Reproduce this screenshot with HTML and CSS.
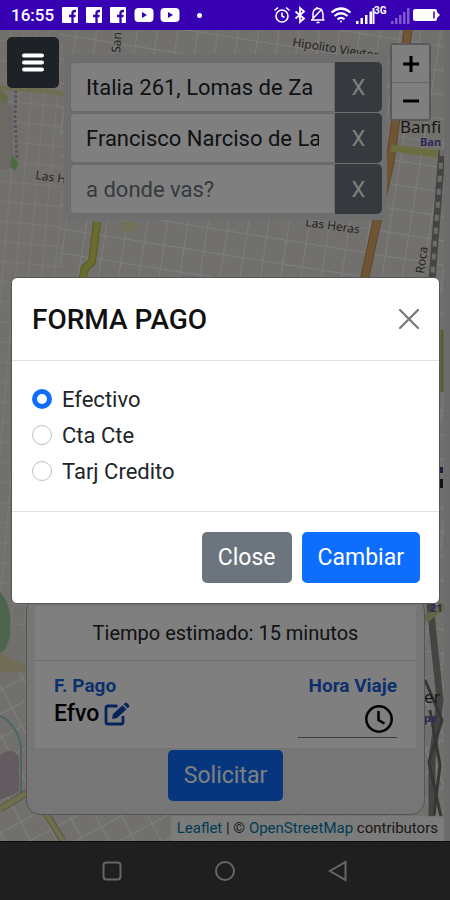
FILE: index.html
```html
<!DOCTYPE html>
<html lang="es">
  <head>
    <meta charset="UTF-8" />
    <meta name="viewport" content="width=device-width, initial-scale=1.0" />
    <title>Forma Pago</title>
    <link rel="stylesheet" href="styles.css">
  </head>
  <body>
    <header class="status-bar">
      <span class="status-time">16:55</span>
      <div class="status-apps">
        <svg width="16" height="16" viewBox="0 0 16 16"><rect width="16" height="16" rx="1" fill="#fff"/><path d="M14 4h-1q-2.500 0-2.500 2.500V16M7 9h6.500" fill="none" stroke="#3700b3" stroke-width="2.300"/></svg>
        <svg width="16" height="16" viewBox="0 0 16 16"><rect width="16" height="16" rx="1" fill="#fff"/><path d="M14 4h-1q-2.500 0-2.500 2.500V16M7 9h6.500" fill="none" stroke="#3700b3" stroke-width="2.300"/></svg>
        <svg width="16" height="16" viewBox="0 0 16 16"><rect width="16" height="16" rx="1" fill="#fff"/><path d="M14 4h-1q-2.500 0-2.500 2.500V16M7 9h6.500" fill="none" stroke="#3700b3" stroke-width="2.300"/></svg>
        <svg width="20" height="16" viewBox="0 0 20 16"><rect x="0.500" y="1" width="19" height="14" rx="4" fill="#fff"/><path d="M8 5v6l5-3z" fill="#3700b3"/></svg>
        <svg width="20" height="16" viewBox="0 0 20 16"><rect x="0.500" y="1" width="19" height="14" rx="4" fill="#fff"/><path d="M8 5v6l5-3z" fill="#3700b3"/></svg>
      </div>
      <span class="status-dot"></span>
      <div class="status-system">
        <svg width="18" height="18" viewBox="0 0 18 18" fill="none" stroke="#fff" stroke-width="1.600"><circle cx="9" cy="10" r="6"/><path d="M9 6.500V10l2.500 1.500M1.500 4.500l3.500-3M16.500 4.500L13 1.500"/></svg>
        <svg width="12" height="18" viewBox="0 0 12 18" fill="none" stroke="#fff" stroke-width="1.800"><path d="M1.500 5.500l8.500 7L6 16V2l4 3.500-8.500 7"/></svg>
        <svg width="18" height="18" viewBox="0 0 18 18" fill="none" stroke="#fff" stroke-width="1.500"><path d="M2 14h13.500M4 13.500V8q0-5 4.500-5.500T14 8v6M8 2.500V1M7.500 16.500h3M2.500 14L13 3"/></svg>
        <svg width="22" height="18" viewBox="0 0 22 18" fill="none" stroke="#fff" stroke-width="2.200"><path d="M1.500 6.500q9.500-8 19 0M4.500 10q6.500-5.500 13 0M7.500 13.300q3.500-3 7 0"/><circle cx="11" cy="15.500" r="1" fill="#fff" stroke="none"/></svg>
        <svg width="32" height="20" viewBox="0 0 32 20"><path fill="#fff" d="M1 16h2.500v3H1zM5.500 13H8v6H5.500zM10 10h2.500v9H10zM14.500 6.500H17V19h-2.500z"/><path fill="#fff" d="M17.500 3h2v16h-2z"/><text class="network" x="19" y="9">3G</text></svg>
        <svg width="20" height="20" viewBox="0 0 20 20" fill="#7f5ad0"><path d="M1 16h2.500v3H1zM5 13h2.500v6H5zM9 10h2.500v9H9zM13 7h2.500v12H13zM17 3h2.500v16H17z"/></svg>
        <svg width="27" height="16" viewBox="0 0 27 16"><rect x="0" y="2" width="24" height="12" rx="2" fill="#fff"/><path d="M21 4.500v7" stroke="#3700b3" stroke-width="1.500"/><path d="M24 5l3 3-3 3z" fill="#fff"/></svg>
      </div>
    </header>

    <main class="app">
      <svg class="map" viewBox="0 30 444 811" preserveAspectRatio="xMidYMid slice" aria-hidden="true">
        <defs>
          <pattern id="blocks" width="20" height="24" patternUnits="userSpaceOnUse" patternTransform="rotate(9)">
            <path d="M0 0H20M0 0V24" stroke="#fff" stroke-width="1.800" fill="none"/>
          </pattern>
          <pattern id="smallBlocks" width="13" height="20" patternUnits="userSpaceOnUse" patternTransform="rotate(5)">
            <path d="M0 0H13M0 0V20" stroke="#fbf8f6" stroke-width="1.500" fill="none"/>
          </pattern>
          <pattern id="tiltBlocks" width="23" height="21" patternUnits="userSpaceOnUse" patternTransform="rotate(-28)">
            <path d="M0 0H23M0 0V21" stroke="#fff" stroke-width="2" fill="none"/>
          </pattern>
        </defs>
        <rect y="30" width="444" height="811" fill="#e5e0da"/>
        <path d="M60 30H444V841H60z" fill="url(#blocks)"/>
        <path d="M0 30H62V630H0z" fill="url(#smallBlocks)"/>
        <path d="M0 665H444V841H0z" fill="#e5e0da"/>
        <path d="M0 665H444V841H0z" fill="url(#tiltBlocks)"/>
        <path d="M0 100L12 105 14 168 0 170z" fill="#d9d2cb"/>
        <path d="M0 88L8 96 7 106 0 100z" fill="#cad694"/>
        <path d="M12 155l7 8-4 8-5-4z" fill="#9ad38c"/>
        <path d="M120 222h17v9h-17z" fill="#e0e2ad"/>
        <path d="M0 592Q13 605 10 635 7 652 0 652z" fill="#9dca9b"/>
        <path d="M0 653L26 665V672H0z" fill="#e1d9ae"/>
        <path d="M0 755Q13 745 19 758V792L0 800z" fill="#c6b6c1"/>
        <path d="M16 90l-1 30 2 38" stroke="#b6a1bd" stroke-width="3" stroke-dasharray="3 2" fill="none"/>
        <path d="M0 716Q17 724 21 747V793" stroke="#94c8ce" stroke-width="2" fill="none"/>
        <path d="M0 88Q32 88 65 94" stroke="#dadda0" stroke-width="5" fill="none"/>
        <path d="M97 222L92 262 85 268 82 281" stroke="#b1b53c" stroke-width="8" fill="none"/>
        <path d="M97 222L92 262 85 268 82 281" stroke="#d3d65e" stroke-width="6" fill="none"/>
        <path d="M218 59Q270 63 310 80T390 85" stroke="#f3eee9" stroke-width="5" fill="none"/>
        <path d="M0 809L30 791M40 804L63 841" stroke="#a9aa7c" stroke-width="7" fill="none"/>
        <path d="M0 809L30 791M40 804L63 841" stroke="#dedf9e" stroke-width="5" fill="none"/>
        <path d="M408 30L390 162 377 221 364 281" stroke="#b78b59" stroke-width="9" fill="none"/>
        <path d="M408 30L390 162 377 221 364 281" stroke="#e1aa67" stroke-width="7" fill="none"/>
        <path d="M391 148L438 154" stroke="#d4da81" stroke-width="7" fill="none"/>
        <path d="M442 150L432 281V490M430 604L440 700 432 760V817" stroke="#8c8986" stroke-width="7" fill="none"/>
        <path d="M442 150L432 281V490" stroke="#dad7d4" stroke-width="4" stroke-dasharray="6 7" fill="none"/>
        <path d="M425 680L442 720 429 762 441 817M430 710l10 55-6 50" stroke="#6f6d69" stroke-width="3" fill="none"/>
        <path d="M442 330V392" stroke="#a6bf5d" stroke-width="3"/>
        <path d="M441 467v6" stroke="#3a36a0" stroke-width="4"/>
        <path d="M441 479v9" stroke="#26252a" stroke-width="4"/>
        <path d="M425 620L444 605" stroke="#c8cf8d" stroke-width="7"/>
        <g class="street-names">
          <text x="292" y="46" transform="rotate(9 292 46)">Hipolito Vieytes</text>
          <text x="35" y="179" transform="rotate(8 35 179)">Las H</text>
          <text x="305" y="226" transform="rotate(8 305 226)">Las Heras</text>
          <text x="120" y="53" transform="rotate(-86 120 53)">San</text>
          <text x="424" y="274" transform="rotate(-82 424 274)">Roca</text>
        </g>
        <text class="town" x="400" y="133">Banfi</text>
        <text class="station" x="420" y="146">Ban</text>
        <text class="town" x="424" y="703">er</text>
        <text class="station" x="424" y="722">pe</text>
        <text class="station" x="430" y="612">21</text>
      </svg>

      <form class="search">
        <div class="search-row">
          <input type="text" value="Italia 261, Lomas de Za" aria-label="Origen">
          <button type="button">X</button>
        </div>
        <div class="search-row">
          <input type="text" value="Francisco Narciso de La" aria-label="Destino">
          <button type="button">X</button>
        </div>
        <div class="search-row">
          <input type="text" placeholder="a donde vas?" aria-label="Otro destino">
          <button type="button">X</button>
        </div>
      </form>

      <div class="map-zoom">
        <button type="button" aria-label="Acercar"><svg width="16" height="16" viewBox="0 0 16 16"><path d="M8 0v16M0 8h16" stroke="#000" stroke-width="3"/></svg></button>
        <button type="button" aria-label="Alejar"><svg width="16" height="16" viewBox="0 0 16 16"><path d="M0 8h16" stroke="#000" stroke-width="3"/></svg></button>
      </div>

      <section class="trip">
        <div class="trip-card">
          <p class="trip-time">Tiempo estimado: 15 minutos</p>
          <div class="trip-options">
            <div class="trip-payment">
              <a href="#pago">F. Pago</a>
              <div class="payment-value">
                <span>Efvo</span>
                <svg width="26" height="24" viewBox="0 0 26 24"><path d="M13.500 4H4Q2 4 2 6v14q0 2 2 2h13q2 0 2-2v-6" fill="none" stroke="#0d47b8" stroke-width="2.800"/><path d="M8 17l1-5L18.500 3.200l4 4L13 16zM19.600 2.200L21 1q1-1 2 0l2 2q1 1 0 2l-1.400 1.300z" fill="#0d47b8"/></svg>
              </div>
            </div>
            <div class="trip-hour">
              <label for="hora">Hora Viaje</label>
              <div class="hour-field">
                <input type="text" id="hora">
                <svg width="34" height="30" viewBox="0 0 34 30" fill="none" stroke="#000" stroke-width="2.500"><circle cx="16" cy="15" r="12.700"/><path d="M15.500 7v9l6 3.500"/></svg>
              </div>
            </div>
          </div>
        </div>
        <button type="button" class="btn btn-primary">Solicitar</button>
      </section>

      <footer class="attribution"><a href="#leaflet">Leaflet</a> | © <a href="#osm">OpenStreetMap</a> contributors</footer>

      <div class="overlay">
        <form class="modal" role="dialog" aria-labelledby="modalTitle">
          <div class="modal-header">
            <h5 id="modalTitle">FORMA PAGO</h5>
            <button type="button" class="btn-close" aria-label="Close"><svg width="22" height="22" viewBox="0 0 22 22"><path d="M2 2l18 18M20 2L2 20" stroke="#777" stroke-width="2.200" stroke-linecap="round"/></svg></button>
          </div>
          <div class="modal-body">
            <label><input type="radio" name="pago" checked> Efectivo</label>
            <label><input type="radio" name="pago"> Cta Cte</label>
            <label><input type="radio" name="pago"> Tarj Credito</label>
          </div>
          <div class="modal-footer">
            <button type="button" class="btn btn-secondary">Close</button>
            <button type="button" class="btn btn-primary">Cambiar</button>
          </div>
        </form>
      </div>

      <button type="button" class="menu-toggle" aria-label="Menu"><svg width="22" height="20" viewBox="0 0 22 20"><path d="M2 2.500h18M2 9.500h18M2 16.500h18" stroke="#fff" stroke-width="4" stroke-linecap="round"/></svg></button>
    </main>

    <nav class="nav-bar">
      <button type="button" aria-label="Recientes"><svg width="22" height="22" viewBox="0 0 22 22"><rect x="2.500" y="2.500" width="17" height="17" rx="3"/></svg></button>
      <button type="button" aria-label="Inicio"><svg width="22" height="22" viewBox="0 0 22 22"><circle cx="11" cy="11" r="9"/></svg></button>
      <button type="button" aria-label="Atras"><svg width="22" height="22" viewBox="0 0 22 22"><path d="M18.500 2v18L3 11z"/></svg></button>
    </nav>
  </body>
</html>
```

FILE: styles.css
```css
* {
  box-sizing: border-box;
}

body {
  margin: 0;
  min-height: 100vh;
  display: flex;
  flex-direction: column;
  font-family: Roboto, sans-serif;
  font-size: 23px;
  color: #212529;
}

button,
input {
  font: inherit;
}

svg {
  display: block;
  flex: none;
}

a {
  text-decoration: none;
}

/* Phone status bar */
.status-bar {
  height: 30px;
  display: flex;
  align-items: center;
  padding: 0 10px 0 11px;
  background-color: #3700b3;
  color: #fff;
}

.status-time {
  font-size: 17px;
  font-weight: 500;
}

.status-apps {
  display: flex;
  gap: 8px;
  margin-left: 8px;
}

.status-apps svg:nth-child(n + 5) {
  margin-left: -2px;
}

.status-dot {
  width: 5px;
  height: 5px;
  margin-left: 17px;
  border-radius: 50%;
  background-color: #fff;
}

.status-system {
  display: flex;
  align-items: center;
  gap: 3px;
  margin-left: auto;
}

.network {
  font-size: 10px;
  font-weight: bold;
  fill: #fff;
}

/* Map */
.app {
  position: relative;
  flex: 1;
  overflow: hidden;
  background-color: #d8d8d8;
}

.map {
  position: absolute;
  top: 0;
  left: 0;
  width: calc(100% - 6px);
  height: 100%;
}

.street-names {
  font-family: "Noto Sans", sans-serif;
  font-size: 12px;
  fill: #4c4a48;
}

.town {
  font-family: "Noto Sans", sans-serif;
  font-size: 17px;
  fill: #33312f;
}

.station {
  font-family: "Noto Sans", sans-serif;
  font-size: 11px;
  font-weight: bold;
  fill: #5650b4;
}

.map-zoom {
  position: absolute;
  top: 13px;
  right: 19px;
  border: 2px solid #b4b2b0;
  border-radius: 4px;
}

.map-zoom button {
  display: flex;
  align-items: center;
  justify-content: center;
  width: 37px;
  height: 37px;
  padding: 0;
  border: none;
  background-color: #fff;
}

.map-zoom button + button {
  border-top: 1px solid #ccc;
}

/* Addresses */
.search {
  position: absolute;
  top: 24px;
  left: 64px;
  right: 63px;
  display: flex;
  flex-direction: column;
  gap: 1px;
  padding: 8px 5px 6px 6px;
  border-radius: 4px;
  background-color: #dcdddd;
  font-size: 22px;
}

.search-row {
  display: flex;
  height: 50px;
}

.search-row input {
  flex: 1;
  min-width: 0;
  padding: 0 15px;
  border: 1px solid #ced4da;
  border-radius: 5px 0 0 5px;
  background-color: #fff;
  color: #212529;
}

.search-row input::placeholder {
  color: #6c757d;
  opacity: 1;
}

.search-row button {
  width: 47px;
  padding: 0;
  border: none;
  border-radius: 0 5px 5px 0;
  background-color: #6c757d;
  color: #fff;
}

/* Trip summary */
.trip {
  position: absolute;
  left: 26px;
  right: 25px;
  bottom: 26px;
  display: flex;
  flex-direction: column;
  align-items: center;
  gap: 2px;
  padding: 8px 8px 13px;
  border: 1px solid #aaa;
  border-radius: 14px;
  background-color: #ededed;
}

.trip-card {
  width: 100%;
  background-color: #fff;
}

.trip-time {
  margin: 0;
  padding: 15px 0;
  border-bottom: 1px solid #d2d2d2;
  font-size: 20px;
  line-height: 24px;
  text-align: center;
}

.trip-options {
  display: flex;
  justify-content: space-between;
  padding: 11px 19px 10px;
}

.trip-payment a,
.trip-hour label {
  display: block;
  color: #1a5fd8;
  font-size: 19px;
  font-weight: bold;
  line-height: 28px;
}

.payment-value {
  display: flex;
  align-items: center;
  gap: 5px;
  font-weight: 500;
  line-height: 28px;
  color: #000;
}

.trip-hour {
  display: flex;
  flex-direction: column;
  align-items: flex-end;
}

.hour-field {
  display: flex;
  align-items: center;
  width: 99px;
  height: 38px;
  border-bottom: 1px solid #777;
}

.hour-field input {
  flex: 1;
  min-width: 0;
  border: none;
  background: none;
}

.attribution {
  position: absolute;
  right: 6px;
  bottom: 0;
  padding: 0 6px;
  background-color: rgba(255, 255, 255, 0.7);
  color: #333;
  font-size: 15px;
  line-height: 25px;
}

.attribution a {
  color: #0078a8;
}

.btn {
  height: 51px;
  padding: 0 16px;
  border: none;
  border-radius: 5px;
  color: #fff;
}

.btn-primary {
  background-color: #0d6efd;
}

.btn-secondary {
  background-color: #6c757d;
}

/* Payment modal */
.overlay {
  position: absolute;
  inset: 0;
  display: flex;
  align-items: center;
  padding: 10px 10px 0 11px;
  background-color: rgba(0, 0, 0, 0.5);
}

.modal {
  flex: 1;
  border: 1px solid #555;
  border-radius: 6px;
  background-color: #fff;
}

.modal-header {
  display: flex;
  align-items: center;
  justify-content: space-between;
  height: 83px;
  padding: 0 19px 0 20px;
  border-bottom: 1px solid #dee2e6;
}

.modal-header h5 {
  margin: 0;
  color: #111;
  font-size: 28px;
  font-weight: 500;
}

.btn-close {
  padding: 0;
  border: none;
  background: none;
}

.modal-body {
  padding: 20px 20px 22px;
  font-size: 22px;
}

.modal-body label {
  display: flex;
  align-items: center;
  gap: 10px;
  height: 36px;
}

.modal-body input {
  appearance: none;
  width: 20px;
  height: 20px;
  margin: 0;
  border: 1px solid #bfbfbf;
  border-radius: 50%;
}

.modal-body input:checked {
  border: 5px solid #0d6efd;
}

.modal-footer {
  display: flex;
  justify-content: flex-end;
  gap: 10px;
  padding: 20px 19px;
  border-top: 1px solid #dee2e6;
}

.menu-toggle {
  position: absolute;
  top: 7px;
  left: 7px;
  display: flex;
  align-items: center;
  justify-content: center;
  width: 52px;
  height: 51px;
  padding: 0;
  border: none;
  border-radius: 5px;
  background-color: #1e2226;
}

/* Phone navigation */
.nav-bar {
  display: flex;
  align-items: center;
  justify-content: space-evenly;
  height: 59px;
  padding: 0 10px;
  border-top: 1px solid #0c0c0c;
  background-color: #1f1f1f;
}

.nav-bar button {
  padding: 0;
  border: none;
  background: none;
}

.nav-bar svg {
  fill: none;
  stroke: #666;
  stroke-width: 2;
}
```
